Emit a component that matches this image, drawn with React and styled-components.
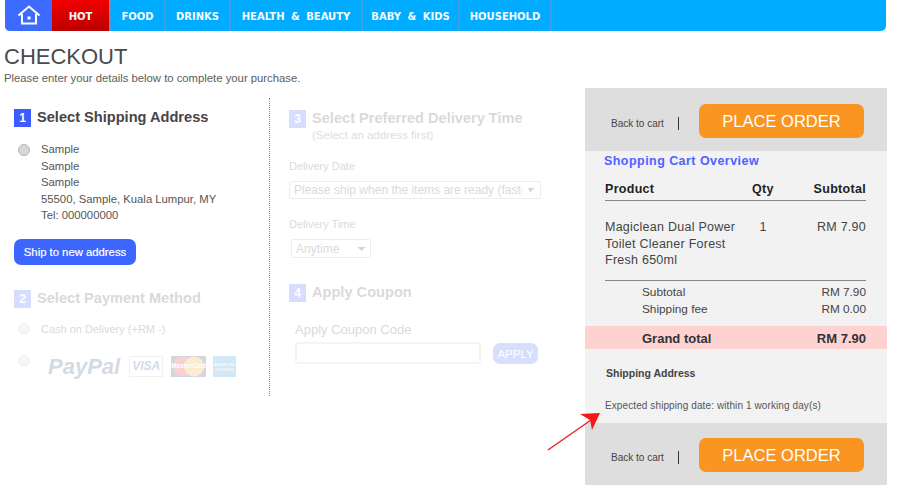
import React from "react";
import styled, { createGlobalStyle } from "styled-components";

const Global = createGlobalStyle`
  html, body { margin: 0; padding: 0; background: #fff; }
  body { font-family: "Liberation Sans", Arial, sans-serif; color: #444; width: 900px; height: 500px; overflow: hidden; }
  * { box-sizing: border-box; }
`;

const Page = styled.div`
  position: relative;
  width: 900px;
  height: 500px;
  overflow: hidden;
`;

const NavBar = styled.nav`
  display: flex;
  align-items: stretch;
  height: 31px;
  width: 881px;
  margin-left: 5px;
  background: #00acff;
  border-radius: 0 0 5px 5px;
  overflow: hidden;
`;

const HomeLink = styled.a`
  width: 47px;
  background: #3d6bff;
  display: flex;
  align-items: center;
  justify-content: center;
  padding-bottom: 1px;
`;

const NavItem = styled.a`
  display: flex;
  align-items: center;
  justify-content: center;
  width: ${(p) => p.$w}px;
  padding-top: 1px;
  font-family: "DejaVu Sans", sans-serif;
  font-size: 10px;
  font-weight: 700;
  word-spacing: 3px;
  color: #f4fbff;
  border-right: 2px solid #3d9fe0;
  background: ${(p) => (p.$hot ? "linear-gradient(#f20000, #bd0000)" : "transparent")};
`;

const Header = styled.header`
  padding: 13px 0 0 4px;
  height: 57px;
`;

const Title = styled.h1`
  margin: 0;
  font-size: 22px;
  line-height: 26px;
  font-weight: 400;
  color: #4a4a4a;
`;

const Subtitle = styled.p`
  margin: 1px 0 0;
  font-size: 11.3px;
  line-height: 14px;
  color: #5c5c5c;
`;

const Columns = styled.div`
  display: flex;
  align-items: flex-start;
`;

const LeftColumn = styled.div`
  width: 270px;
  padding: 11px 0 0 14px;
  height: 298px;
  margin-top: 10px;
  border-right: 1px dotted #888;
`;

const MiddleColumn = styled.div`
  width: 315px;
  margin-top: 10px;
  padding: 12px 0 0 19px;
`;

const Section = styled.section`
  opacity: ${(p) => (p.$faded ? 0.2 : 1)};
`;

const StepHead = styled.div`
  display: flex;
  align-items: flex-start;
  gap: 6px;
  margin-top: ${(p) => p.$top || 0}px;
`;

const StepNumber = styled.span`
  width: 17px;
  height: 18px;
  background: #3d5bff;
  color: #fff;
  font-size: 12px;
  font-weight: 700;
  line-height: 19px;
  text-align: center;
  flex: none;
`;

const StepTitle = styled.h2`
  margin: 0;
  font-size: 14.6px;
  line-height: 17px;
  font-weight: 700;
  color: #4a4545;
  white-space: nowrap;
`;

const StepHint = styled.div`
  margin-top: 2px;
  font-size: 11.5px;
  line-height: 13px;
  color: #555;
`;

const RadioRow = styled.div`
  display: flex;
  align-items: flex-start;
  margin: ${(p) => p.$m || "0"};
`;

const Radio = styled.span`
  width: 12px;
  height: 12px;
  flex: none;
  border-radius: 50%;
  border: 1px solid #b4b4b4;
  background: #d6d6d6;
  margin: ${(p) => p.$m || "0 0 0 4px"};
`;

const AddressText = styled.div`
  margin-left: 11px;
  font-size: 11.3px;
  line-height: 16.6px;
  color: #555;
`;

const BlueButton = styled.button`
  display: block;
  border: 0;
  padding: 0;
  background: #3d66ff;
  color: #fff;
  font-family: inherit;
  font-size: 11.3px;
  font-weight: 400;
  -webkit-text-stroke: 0.2px #fff;
  width: 122px;
  height: 26px;
  border-radius: 7px;
  margin-top: 15px;
`;

const PaymentLabel = styled.span`
  margin-left: 11px;
  font-size: 11px;
  line-height: 12px;
  color: #444;
`;

const LogoRow = styled.div`
  display: flex;
  align-items: flex-start;
  margin-left: 18px;
  margin-top: 1px;
`;

const PayPal = styled.span`
  font-size: 22px;
  line-height: 22px;
  font-weight: 700;
  font-style: italic;
  color: #2b4d78;
  margin-right: 9px;
`;

const VisaCard = styled.span`
  width: 34px;
  height: 21px;
  border: 1px solid #bbb;
  color: #1c4f95;
  font-size: 12px;
  line-height: 19px;
  font-weight: 700;
  font-style: italic;
  text-align: center;
  margin-right: 8px;
`;

const MasterCard = styled.span`
  position: relative;
  width: 35px;
  height: 21px;
  background: #243a78;
  margin-right: 7px;
`;

const MasterLabel = styled.span`
  position: absolute;
  left: 0;
  top: 5px;
  width: 100%;
  text-align: center;
  font-size: 6.5px;
  line-height: 10px;
  font-weight: 700;
  color: #fff;
`;

const AmexCard = styled.span`
  width: 23px;
  height: 21px;
  background: #2a8fcf;
  color: #fff;
  font-size: 4px;
  line-height: 5px;
  padding-top: 6px;
  text-align: center;
`;

const FieldLabel = styled.div`
  font-size: 11px;
  line-height: 13px;
  color: #444;
  margin: ${(p) => p.$m || "0"};
`;

const SelectBox = styled.select`
  display: block;
  appearance: none;
  width: ${(p) => p.$w}px;
  height: ${(p) => p.$h}px;
  margin: ${(p) => p.$m || "0"};
  padding: 0 18px 0 4px;
  border: 1px solid #aaa;
  border-radius: 2px;
  background-color: #fff;
  background-image:
    linear-gradient(45deg, transparent 50%, #333 50%),
    linear-gradient(-45deg, transparent 50%, #333 50%);
  background-size: 4px 4px, 4px 4px;
  background-position: right 9px center, right 5px center;
  background-repeat: no-repeat;
  font-family: inherit;
  font-size: 12px;
  color: #444;
`;

const CouponLabel = styled.div`
  font-size: 13px;
  line-height: 15px;
  color: #444;
  margin: 20px 0 5px 6px;
`;

const CouponRow = styled.div`
  display: flex;
  align-items: center;
  margin-left: 6px;
`;

const CouponInput = styled.div`
  width: 186px;
  height: 22px;
  border: 2px solid #d0d0d0;
`;

const ApplyButton = styled.div`
  width: 45px;
  height: 21px;
  margin-left: 12px;
  border-radius: 7px;
  background: #3d66ff;
  color: #fff;
  font-size: 11.5px;
  line-height: 22px;
  text-align: center;
`;

const Panel = styled.aside`
  width: 302px;
  background: #f2f2f2;
`;

const OrderBar = styled.div`
  display: flex;
  align-items: center;
  height: ${(p) => p.$h}px;
  padding: 3px 0 0 26px;
  background: #dedede;
`;

const BackLink = styled.a`
  font-size: 10px;
  color: #444;
  width: 67px;
  padding-top: 4px;
  white-space: nowrap;
`;

const BarDivider = styled.span`
  width: 1px;
  height: 13px;
  background: #333;
  margin-top: 4px;
`;

const PlaceOrder = styled.button`
  width: 165px;
  height: 34px;
  margin-left: 20px;
  border: 0;
  padding: 0;
  border-radius: 7px;
  background: #f99520;
  color: #fff;
  font-family: inherit;
  font-size: 16.5px;
`;

const OverviewTitle = styled.h3`
  margin: 0;
  padding: 3px 0 0 19px;
  font-size: 12.5px;
  line-height: 15px;
  letter-spacing: 0.45px;
  font-weight: 700;
  color: #4f63ff;
`;

const CartTable = styled.div`
  margin: 0 21px 0 20px;
`;

const CartRow = styled.div`
  display: grid;
  grid-template-columns: 147px 38px 1fr;
  align-items: start;
  font-size: 12.5px;
  color: #444;
`;

const CartHead = styled(CartRow)`
  margin-top: 12px;
  padding-bottom: 2px;
  line-height: 17px;
  border-bottom: 1px solid #888;
  font-weight: 700;
  letter-spacing: 0.3px;
  color: #222;
`;

const ItemRow = styled(CartRow)`
  padding: 18px 0 11px;
  line-height: 16.5px;
  letter-spacing: 0.25px;
  border-bottom: 1px solid #888;
`;

const ItemName = styled.span`
  max-width: 135px;
`;

const Right = styled.span`
  text-align: right;
`;

const SumRow = styled.div`
  display: flex;
  justify-content: space-between;
  padding-left: 37px;
  font-size: 11.8px;
  line-height: 17px;
  color: #444;
`;

const SumList = styled.div`
  margin: 3px 21px 8px 20px;
`;

const GrandRow = styled.div`
  display: flex;
  justify-content: space-between;
  height: 23px;
  padding: 0 21px 0 57px;
  background: #ffd2d2;
  font-size: 13px;
  line-height: 25px;
  font-weight: 700;
  color: #333;
`;

const ShipHead = styled.div`
  padding: 18px 0 0 21px;
  font-size: 10.5px;
  line-height: 12px;
  font-weight: 700;
  color: #444;
`;

const ShipNote = styled.div`
  padding: 21px 0 11px 20px;
  font-size: 10px;
  line-height: 12px;
  letter-spacing: 0.1px;
  color: #555;
`;

const Arrow = styled.svg`
  position: absolute;
  left: 545px;
  top: 408px;
`;

const HomeIcon = () => (
  <svg width="24" height="20" viewBox="0 0 24 20" fill="none" stroke="#fff" strokeWidth="2">
    <path d="M1.5 10.5 12 1.5l10.5 9" strokeLinejoin="miter" />
    <path d="M5 9v9.5h14V9" />
    <rect x="10.5" y="11.5" width="3" height="3" fill="#fff" stroke="none" />
  </svg>
);

const navItems = [
  { label: "FOOD", w: 55 },
  { label: "DRINKS", w: 65 },
  { label: "HEALTH & BEAUTY", w: 132 },
  { label: "BABY & KIDS", w: 97 },
  { label: "HOUSEHOLD", w: 92 },
];

const OrderActions = ({ h }) => (
  <OrderBar $h={h}>
    <BackLink>Back to cart</BackLink>
    <BarDivider />
    <PlaceOrder>PLACE ORDER</PlaceOrder>
  </OrderBar>
);

export default function App() {
  return (
    <Page>
      <Global />
      <NavBar>
        <HomeLink>
          <HomeIcon />
        </HomeLink>
        <NavItem $hot $w={59}>HOT</NavItem>
        {navItems.map((item) => (
          <NavItem key={item.label} $w={item.w}>{item.label}</NavItem>
        ))}
      </NavBar>

      <Header>
        <Title>CHECKOUT</Title>
        <Subtitle>Please enter your details below to complete your purchase.</Subtitle>
      </Header>

      <Columns>
        <LeftColumn>
          <Section>
            <StepHead>
              <StepNumber>1</StepNumber>
              <StepTitle>Select Shipping Address</StepTitle>
            </StepHead>
            <RadioRow $m="14px 0 0">
              <Radio $m="3px 0 0 4px" />
              <AddressText>
                Sample<br />
                Sample<br />
                Sample<br />
                55500, Sample, Kuala Lumpur, MY<br />
                Tel: 000000000
              </AddressText>
            </RadioRow>
            <BlueButton>Ship to new address</BlueButton>
          </Section>
          <Section $faded>
            <StepHead $top={25}>
              <StepNumber>2</StepNumber>
              <StepTitle>Select Payment Method</StepTitle>
            </StepHead>
            <RadioRow $m="15px 0 0">
              <Radio />
              <PaymentLabel>Cash on Delivery (+RM -)</PaymentLabel>
            </RadioRow>
            <RadioRow $m="20px 0 0">
              <Radio />
              <LogoRow>
                <PayPal>PayPal</PayPal>
                <VisaCard>VISA</VisaCard>
                <MasterCard>
                  <svg width="35" height="21" viewBox="0 0 35 21">
                    <circle cx="12" cy="10.5" r="10" fill="#d8232a" />
                    <circle cx="23" cy="10.5" r="10" fill="#f7a11a" />
                  </svg>
                  <MasterLabel>MasterCard</MasterLabel>
                </MasterCard>
                <AmexCard>AMERICAN EXPRESS</AmexCard>
              </LogoRow>
            </RadioRow>
          </Section>
        </LeftColumn>

        <MiddleColumn>
          <Section $faded>
            <StepHead>
              <StepNumber>3</StepNumber>
              <div>
                <StepTitle>Select Preferred Delivery Time</StepTitle>
                <StepHint>(Select an address first)</StepHint>
              </div>
            </StepHead>
            <FieldLabel $m="18px 0 0">Delivery Date</FieldLabel>
            <SelectBox $w={252} $h={18} $m="8px 0 0" defaultValue="asap">
              <option value="asap">Please ship when the items are ready (fastest)</option>
            </SelectBox>
            <FieldLabel $m="19px 0 0">Delivery Time</FieldLabel>
            <SelectBox $w={80} $h={19} $m="8px 0 0 2px" defaultValue="any">
              <option value="any">Anytime</option>
            </SelectBox>
          </Section>
          <Section $faded>
            <StepHead $top={26}>
              <StepNumber>4</StepNumber>
              <StepTitle>Apply Coupon</StepTitle>
            </StepHead>
            <CouponLabel>Apply Coupon Code</CouponLabel>
            <CouponRow>
              <CouponInput />
              <ApplyButton>APPLY</ApplyButton>
            </CouponRow>
          </Section>
        </MiddleColumn>

        <Panel>
          <OrderActions h={63} />
          <OverviewTitle>Shopping Cart Overview</OverviewTitle>
          <CartTable>
            <CartHead>
              <span>Product</span>
              <span>Qty</span>
              <Right>Subtotal</Right>
            </CartHead>
            <ItemRow>
              <ItemName>Magiclean Dual Power Toilet Cleaner Forest Fresh 650ml</ItemName>
              <span>&nbsp;&nbsp;1</span>
              <Right>RM 7.90</Right>
            </ItemRow>
          </CartTable>
          <SumList>
            <SumRow>
              <span>Subtotal</span>
              <span>RM 7.90</span>
            </SumRow>
            <SumRow>
              <span>Shipping fee</span>
              <span>RM 0.00</span>
            </SumRow>
          </SumList>
          <GrandRow>
            <span>Grand total</span>
            <span>RM 7.90</span>
          </GrandRow>
          <ShipHead>Shipping Address</ShipHead>
          <ShipNote>Expected shipping date: within 1 working day(s)</ShipNote>
          <OrderActions h={62} />
        </Panel>
      </Columns>

      <Arrow width="60" height="46" viewBox="0 0 60 46">
        <path d="M3 42 L46 12" stroke="#f01818" strokeWidth="1.3" fill="none" />
        <path d="M55 5 L35 6 L45 12 L47 22 Z" fill="#f01818" />
      </Arrow>
    </Page>
  );
}
